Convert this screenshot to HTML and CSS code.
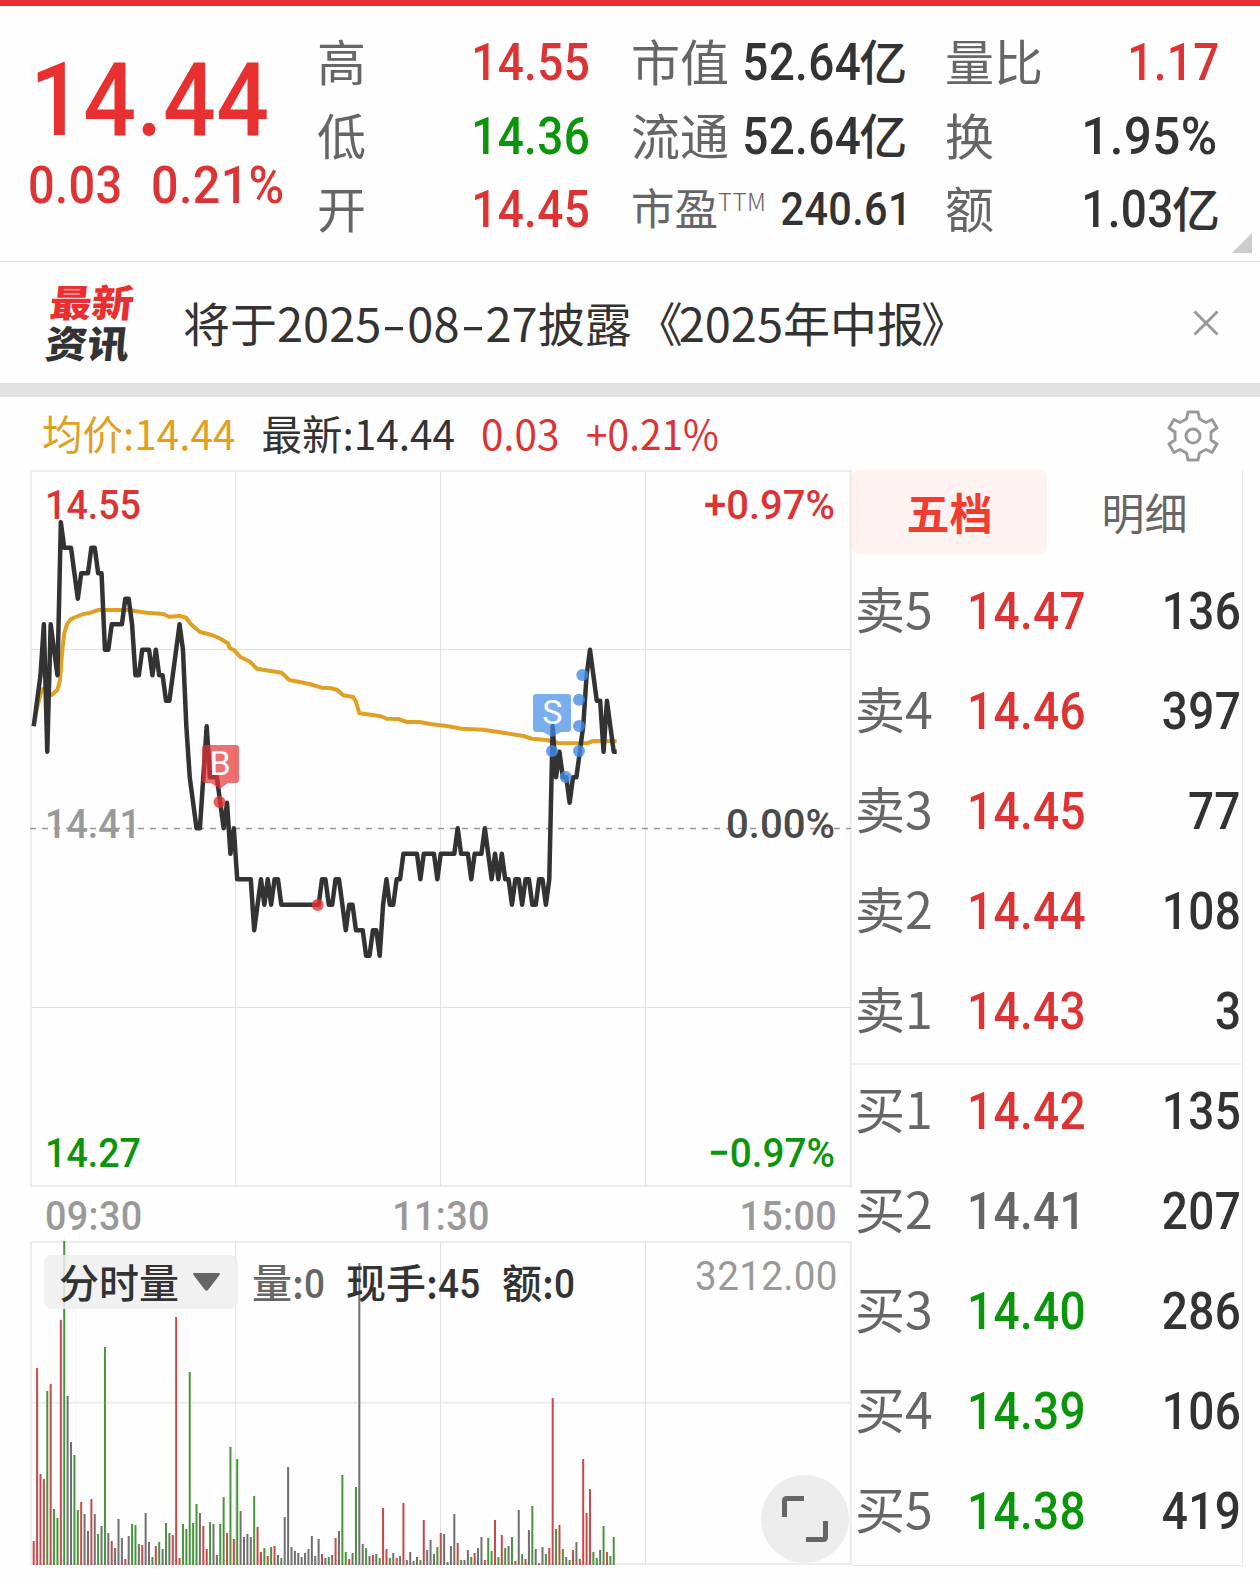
FILE: index.html
```html
<!DOCTYPE html>
<html lang="zh-CN">
<head>
    <meta charset="UTF-8">
    <meta name="viewport" content="width=device-width, initial-scale=1.0">
    <title>分时行情</title>
    <link rel="stylesheet" href="styles.css">
</head>
<body>
    <header class="quote">
        <div class="price-box">
            <div class="price num">14.44</div>
            <div class="change"><span class="num">0.03</span><span class="num">0.21%</span></div>
        </div>
        <div class="stats">
            <div class="stat"><span class="label">高</span><span class="num up">14.55</span></div>
            <div class="stat"><span class="label">低</span><span class="num down">14.36</span></div>
            <div class="stat"><span class="label">开</span><span class="num up">14.45</span></div>
        </div>
        <div class="stats">
            <div class="stat"><span class="label">市值</span><span class="value"><span class="num">52.64</span>亿</span></div>
            <div class="stat"><span class="label">流通</span><span class="value"><span class="num">52.64</span>亿</span></div>
            <div class="stat small"><span class="label">市盈<sup>TTM</sup></span><span class="num">240.61</span></div>
        </div>
        <div class="stats">
            <div class="stat"><span class="label">量比</span><span class="num up">1.17</span></div>
            <div class="stat"><span class="label">换</span><span class="num rate">1.95%</span></div>
            <div class="stat"><span class="label">额</span><span class="value"><span class="num">1.03</span>亿</span></div>
        </div>
        <div class="corner"></div>
    </header>

    <section class="news">
        <div class="news-logo"><span class="red">最新</span><span>资讯</span></div>
        <p class="news-text">将于2025<i>-</i>08<i>-</i>27披露<em>《</em>2025年中报<em>》</em></p>
        <svg class="close" viewBox="0 0 26 26"><path d="M1.5 1.5L24.5 24.5M24.5 1.5L1.5 24.5"/></svg>
    </section>

    <div class="legend">
        <span class="avg">均价:14.44</span>
        <span>最新:14.44</span>
        <span class="up">0.03</span>
        <span class="up pct">+0.21%</span>
        <svg class="gear" viewBox="-26 -26 52 52">
            <path d="M-5 -24H5L6.5 -17L13 -13.5L19 -16.5L24 -8L18 -4V4L24 8L19 16.5L13 13.5L6.5 17L5 24H-5L-6.5 17L-13 13.5L-19 16.5L-24 8L-18 4V-4L-24 -8L-19 -16.5L-13 -13.5L-6.5 -17Z"/>
            <circle r="7"/>
        </svg>
    </div>

    <main>
        <div class="charts">
            <svg class="price-chart" viewBox="0 0 822 718">
                <path class="border" d="M1 1H820M1 716H820M1 0V717"/>
                <path class="border wide" d="M821 0V718"/>
                <path class="grid" d="M205.5 1V716M410.5 1V716M615.5 1V716M1 179.5H820M1 537.5H820"/>
                <path class="zero" d="M0 358.5H821"/>
                <g class="axis">
                    <text class="up" x="15" y="49" textLength="96" lengthAdjust="spacingAndGlyphs">14.55</text>
                    <text class="up" x="674" y="49" textLength="131" lengthAdjust="spacingAndGlyphs">+0.97%</text>
                    <text class="muted" x="15" y="367.5" textLength="96" lengthAdjust="spacingAndGlyphs">14.41</text>
                    <text class="mid" x="696" y="367.5" textLength="109" lengthAdjust="spacingAndGlyphs">0.00%</text>
                    <text class="down" x="15" y="697" textLength="96" lengthAdjust="spacingAndGlyphs">14.27</text>
                    <text class="down" x="678" y="697" textLength="127" lengthAdjust="spacingAndGlyphs">−0.97%</text>
                </g>
                <polyline class="avg-line" points="3.7,255.7 7.3,236.7 11.7,220 15,217.7 18.3,223.3 21.7,225 27.3,220 30,210 32.3,180 34.3,163.3 36.7,155 40,150 43.3,148 48.3,146 53.3,144 58.3,143.3 68.3,140 100,140 105,141 116.7,142.7 133.3,144 139,146.7 150,146 156,147.7 160.7,154 170,162 181.7,165 189.3,168 197.7,173.3 200,178.3 204,180 210,186.7 220,191.7 226.7,198.7 251.7,202.7 259.3,210 279.3,214 291.7,217.7 300,218 307.3,220 313.3,225.3 323.3,227 326,231.7 329.3,243.3 350,246 356.7,248.7 368.3,249 376.7,252 390,252 400,254 416.7,256 431.7,258.7 453.3,259.7 476.7,263.3 493.3,266 501.7,268.7 516.7,270 528.3,273 556.7,273.3 563.3,271 586.7,271.3"/>
                <polyline class="price-line" id="priceLine"/>
                <g class="buy">
                    <path d="M175 275H206Q209 275 209 278V310Q209 313 206 313H198L189.5 319L181 313H175Q172 313 172 310V278Q172 275 175 275Z"/>
                    <circle cx="189.5" cy="332" r="6"/>
                    <circle cx="287.7" cy="435" r="6"/>
                </g>
                <g class="sell">
                    <path d="M506 224H538Q541 224 541 227V259Q541 262 538 262H531L522 267L513 262H506Q503 262 503 259V227Q503 224 506 224Z"/>
                    <circle cx="522" cy="281" r="6"/>
                    <circle cx="535.7" cy="307" r="6"/>
                    <circle cx="549" cy="281" r="6"/>
                    <circle cx="549" cy="256" r="6"/>
                    <circle cx="549" cy="229.7" r="6"/>
                    <circle cx="552.3" cy="205" r="6"/>
                </g>
                <text class="mark" x="190" y="305">B</text>
                <text class="mark" x="522.3" y="254">S</text>
            </svg>

            <div class="times"><span class="num">09:30</span><span class="num">11:30</span><span class="num">15:00</span></div>

            <div class="volume">
                <svg class="volume-chart" viewBox="0 0 822 324">
                    <path class="border" d="M1 1H820M1 161.7H820M1 323H820M1 0V324"/>
                    <path class="border wide" d="M821 0V324"/>
                    <path class="grid" d="M205.5 1V323M410.5 1V323M615.5 1V323"/>
                    <g id="volumeBars"></g>
                </svg>
                <div class="volume-head">
                    <span class="picker">分时量<svg viewBox="0 0 27 18"><path d="M1 0H26Q27.5 0 26.5 2L15 17Q13.5 18.5 12 17L.5 2Q-.5 0 1 0Z"/></svg></span>
                    <span class="vol-a">量:<b class="num">0</b></span>
                    <span class="vol-b">现手:<b class="num">45</b></span>
                    <span class="vol-c">额:<b class="num">0</b></span>
                    <span class="vol-max num">3212.00</span>
                </div>
                <div class="expand">
                    <svg viewBox="0 0 46 46"><path d="M2.5 21V5Q2.5 2.5 5 2.5H22M43.5 25V41Q43.5 43.5 41 43.5H24"/></svg>
                </div>
            </div>
        </div>

        <aside class="book">
            <div class="tabs"><span class="tab active">五档</span><span class="tab">明细</span></div>
            <div class="row"><span class="label">卖5</span><span class="num up">14.47</span><span class="num qty">136</span></div>
            <div class="row"><span class="label">卖4</span><span class="num up">14.46</span><span class="num qty">397</span></div>
            <div class="row"><span class="label">卖3</span><span class="num up">14.45</span><span class="num qty">77</span></div>
            <div class="row"><span class="label">卖2</span><span class="num up">14.44</span><span class="num qty">108</span></div>
            <div class="row"><span class="label">卖1</span><span class="num up">14.43</span><span class="num qty">3</span></div>
            <div class="row split"><span class="label">买1</span><span class="num up">14.42</span><span class="num qty">135</span></div>
            <div class="row"><span class="label">买2</span><span class="num flat">14.41</span><span class="num qty">207</span></div>
            <div class="row"><span class="label">买3</span><span class="num down">14.40</span><span class="num qty">286</span></div>
            <div class="row"><span class="label">买4</span><span class="num down">14.39</span><span class="num qty">106</span></div>
            <div class="row"><span class="label">买5</span><span class="num down">14.38</span><span class="num qty">419</span></div>
        </aside>
    </main>

    <script src="script.js"></script>
</body>
</html>
```
FILE: styles.css
```css
body {
    font-family: "Noto Sans CJK SC", sans-serif;
    margin: 0;
    padding: 0;
    background-color: #fefefe;
    color: #333;
}

.num {
    display: inline-block;
    font-family: Roboto, "Noto Sans CJK SC", sans-serif;
    font-weight: 500;
    letter-spacing: 0.4px;
    white-space: nowrap;
    transform: scaleX(0.9);
    transform-origin: right center;
}

.up {
    color: #dc3434;
}

.down {
    color: #0b950b;
}

.flat {
    color: #666;
}

/* quote header */
.quote {
    position: relative;
    box-sizing: border-box;
    height: 262px;
    border-top: 6px solid #e83030;
    border-bottom: 1px solid #e0e0e0;
    padding: 20px 39px 0 28px;
    display: grid;
    grid-template-columns: 247px 273px 272px 274px;
    column-gap: 42px;
    justify-content: start;
}

.quote .stats:nth-child(3) {
    margin: 0 2px 0 -1px;
}

.quote .stats:nth-child(4) {
    margin-left: -1px;
}

.price-box {
    white-space: nowrap;
}

.price {
    color: #e83030;
    font-size: 102px;
    line-height: 90px;
    letter-spacing: 0.6px;
    margin: 29px 0 0 2px;
    transform: scaleX(0.91);
    transform-origin: left center;
}

.change {
    display: flex;
    gap: 20px;
    margin-top: 11px;
    color: #dc3434;
    font-size: 51px;
    line-height: 60px;
}

.change .num {
    transform: scaleX(0.92);
    transform-origin: left center;
}

.change .num + .num {
    transform: scaleX(0.95);
}

.stat {
    height: 73.5px;
    line-height: 73px;
    display: flex;
    justify-content: space-between;
    font-size: 51px;
    white-space: nowrap;
}

.label {
    color: #666;
    font-size: 49px;
}

.stat .label,
.stat .value {
    margin-top: -3px;
}

.value {
    font-size: 48px;
    font-weight: 500;
}

.value .num {
    font-size: 51px;
    margin-right: -2px;
}

.stat .rate {
    transform: scaleX(0.97);
    margin-right: 2px;
}

.stat.small {
    font-size: 46px;
}

.stat.small .num {
    margin-right: 7px;
}

.small .label {
    font-size: 43.5px;
}

.small sup {
    font-size: 24px;
    font-weight: 300;
    line-height: 0;
    vertical-align: 14px;
    letter-spacing: 0.5px;
}

.corner {
    position: absolute;
    right: 8px;
    bottom: 8px;
    width: 20px;
    height: 20px;
    background-color: #ccc;
    clip-path: polygon(100% 0, 100% 100%, 0 100%);
}

/* news strip */
.news {
    height: 121px;
    border-bottom: 14px solid #e1e1e1;
    display: flex;
    align-items: center;
}

.news-logo {
    width: 96px;
    margin: -3px 0 0 48px;
    font-size: 42px;
    font-weight: 900;
    line-height: 46px;
    transform: skewX(-6deg) scaleY(0.9);
}

.news-logo span {
    display: block;
}

.news-logo .red {
    color: #e83030;
}

.news-text {
    margin: -1px 0 0 39px;
    font-size: 47px;
    line-height: 60px;
    white-space: nowrap;
}

.news-text i {
    font-style: normal;
    display: inline-block;
    width: 26px;
    text-align: center;
    transform: scaleX(1.5);
}

.news-text em {
    font-style: normal;
    display: inline-block;
    transform: translateX(4px);
}

.news-text em:last-child {
    transform: translateX(-3px);
}

.close {
    width: 26px;
    height: 26px;
    margin: 0 41px 0 auto;
    fill: none;
    stroke: #999;
    stroke-width: 3;
}

/* legend over the chart */
.legend {
    height: 73px;
    padding: 0 41px 0 42px;
    display: flex;
    align-items: center;
    gap: 27px;
    font-size: 40.5px;
    line-height: 72px;
}

.legend span {
    margin-top: -1px;
}

.legend span + span {
    margin-left: -1px;
}

.legend .pct {
    transform: scaleX(0.96);
    transform-origin: left center;
}

.avg {
    color: #e0a020;
}

.gear {
    width: 52px;
    height: 52px;
    margin: 5px 0 0 auto;
    fill: none;
    stroke: #999;
    stroke-width: 3;
    stroke-linejoin: round;
}

main {
    display: flex;
    padding-left: 30px;
}

.charts {
    width: 822px;
}

.charts svg {
    display: block;
}

.price-chart {
    width: 822px;
    height: 718px;
}

.border {
    fill: none;
    stroke: #ededed;
    stroke-width: 2;
}

.border.wide {
    stroke-width: 3;
}

.grid {
    fill: none;
    stroke: #e2e2e2;
    stroke-width: 1;
}

.zero {
    stroke: #999;
    stroke-width: 1.5;
    stroke-dasharray: 6 6;
}

.axis text {
    font-family: Roboto, sans-serif;
    font-size: 41px;
    font-weight: 500;
}

.axis .up {
    fill: #dc3434;
}

.axis .down {
    fill: #0b950b;
}

.axis .muted {
    fill: #999;
}

.axis .mid {
    fill: #4a4a4a;
}

.avg-line {
    fill: none;
    stroke: #dfa023;
    stroke-width: 4;
    stroke-linejoin: round;
}

.price-line {
    fill: none;
    stroke: #333;
    stroke-width: 4.5;
    stroke-linejoin: round;
}

.buy {
    fill: #e63232;
}

.buy path {
    opacity: 0.7;
}

.buy circle {
    opacity: 0.8;
}

.sell {
    fill: #438be8;
}

.sell path {
    opacity: 0.7;
}

.sell circle {
    opacity: 0.8;
}

.mark {
    font-family: Roboto, sans-serif;
    font-size: 34px;
    fill: #fff;
    text-anchor: middle;
}

.times {
    height: 53px;
    padding: 0 15px 0 15px;
    display: flex;
    justify-content: space-between;
    color: #999;
    font-size: 41px;
    line-height: 56px;
}

.times .num {
    transform: scaleX(0.92);
}

.times .num:first-child {
    transform-origin: left center;
}

.times .num:nth-child(2) {
    transform-origin: center;
}

/* volume */
.volume {
    position: relative;
    height: 324px;
}

.volume-chart {
    width: 822px;
    height: 324px;
}

.bar-r {
    fill: #cc4848;
}

.bar-g {
    fill: #46963c;
}

.bar-k {
    fill: #707070;
}

.volume-head {
    position: absolute;
    top: 14px;
    left: 14px;
    right: 14px;
    height: 54px;
    line-height: 52px;
    display: flex;
    font-size: 40px;
    font-weight: 500;
}

.volume-head > span {
    white-space: nowrap;
}

.picker {
    box-sizing: border-box;
    width: 194px;
    padding-left: 15px;
    border-radius: 8px;
    background-color: rgba(238, 238, 238, 0.85);
    display: flex;
}

.picker svg {
    width: 27px;
    height: 18px;
    margin: 18px 0 0 14px;
    fill: #666;
}

.volume-head b {
    font-size: 41px;
    transform-origin: left center;
}

.vol-a {
    color: #666;
    margin-left: 14px;
    width: 94px;
}

.vol-b {
    width: 156px;
}

.volume-head .vol-max {
    color: #999;
    font-size: 41px;
    font-weight: 400;
    line-height: 42px;
    margin-left: auto;
    transform: scaleX(0.94);
}

.expand {
    position: absolute;
    right: 3px;
    bottom: 2px;
    width: 88px;
    height: 88px;
    border-radius: 50%;
    background-color: #ededed;
    display: flex;
    align-items: center;
    justify-content: center;
}

.expand svg {
    width: 46px;
    height: 46px;
    fill: none;
    stroke: #666;
    stroke-width: 5;
}

/* order book */
.book {
    box-sizing: border-box;
    width: 391px;
    height: 1096px;
    border-right: 1px solid #e8e8e8;
    border-bottom: 1px solid #e8e8e8;
}

.tabs {
    display: flex;
    height: 91px;
}

.tab {
    flex: 1;
    height: 84px;
    line-height: 82px;
    text-align: center;
    font-size: 43px;
    color: #666;
    border-radius: 8px;
}

.tab.active {
    background-color: #fff3f2;
    color: #f23c32;
    font-weight: 700;
}

.row {
    box-sizing: border-box;
    height: 100px;
    line-height: 102px;
    padding: 0 1px 0 3px;
    display: flex;
    font-size: 51px;
}

.row .label {
    width: 112px;
    line-height: 93px;
    font-size: 50px;
}

.row .num {
    transform-origin: left center;
}

.row .qty {
    margin-left: auto;
    transform: scaleX(0.9);
    transform-origin: right center;
}

.row.split {
    position: relative;
}

.row.split::before {
    content: "";
    position: absolute;
    left: 0;
    right: 0;
    top: 2px;
    height: 2px;
    background-color: #f3f3f3;
}
```
FILE: script.js
```
// one point per trading minute, 240 minutes across the chart
const STEP = 3.392;
const START = 3.7;

// price per minute, in cents above the previous close (14.41)
const prices = [
    4, 5, 6, 8, 3, 8, 7, 6, 12, 11, 11, 11, 10, 9, 10, 10, 10, 11, 11, 10,
    10, 7, 7, 8, 8, 8, 8, 9, 9, 8, 6, 6, 7, 7, 7, 6, 7, 6, 6, 5,
    5, 6, 7, 8, 7, 4, 2, 1, 0, 0, 2, 4, 2, 2, 2, 1, 0, 1, -1, 0,
    -2, -2, -2, -2, -2, -4, -3, -2, -3, -2, -3, -2, -2, -3, -3, -3, -3, -3, -3, -3,
    -3, -3, -3, -3, -3, -2, -2, -3, -3, -2, -2, -3, -4, -3, -3, -4, -4, -4, -5, -5,
    -4, -4, -5, -3, -2, -3, -3, -2, -2, -1, -1, -1, -1, -1, -2, -1, -1, -1, -1, -2,
    -1, -1, -1, -1, -1, 0, -1, -1, -1, -2, -1, -1, -1, 0, -1, -2, -1, -2, -1, -2,
    -2, -3, -2, -2, -3, -2, -2, -3, -3, -2, -2, -3, -2, 4, 2, 3, 2, 2, 1, 2,
    2, 3, 4, 6, 7, 6, 5, 5, 3, 5, 4, 3
];

// volume per minute: colour (r = up, g = down, k = flat) and bar height
const volumes = (
    'r24 r197 r91 r86 g174 r181 g56 g47 r245 g324 k169 k123 g110 g55 r63 k51 k34 r66 k51 g31 ' +
    'k39 g218 k32 r24 k17 k46 k27 r6 k29 g41 g40 k21 r20 k52 k23 g8 r19 g23 k16 g42 ' +
    'k32 r30 r248 r7 g41 g36 g193 g42 g61 k52 r39 r16 g43 k41 k10 g41 g68 r32 g118 r26 ' +
    'g106 k54 k28 k31 k28 g69 r38 r13 g17 r9 g18 r19 k10 g7 k48 k98 k18 k14 k12 k8 ' +
    'k12 k16 k29 k9 k26 r11 k7 g8 k10 r27 k34 g90 g13 r6 k12 g78 k302 k21 g17 k9 ' +
    'r10 k11 g7 r57 r16 g7 k12 r7 k9 r62 k5 k13 k4 k8 g5 r45 k15 k25 k11 g18 ' +
    'r32 k31 k3 k19 k51 r22 g5 k5 k15 g8 r12 k17 k28 r5 g27 g14 r45 g8 r30 g17 ' +
    'k19 g28 r4 k55 g11 r6 k35 g59 k16 r2 k18 g11 r17 r167 g36 r40 g16 k8 g5 r15 ' +
    'k23 r6 r106 r52 r76 g13 g7 k15 g39 r13 g9 g28'
).split(' ');

const points = prices.map((c, i) => `${START + i * STEP},${358.3 - c * 25.5}`);
points.push(`586.7,${358.3 - 3 * 25.5}`);
document.getElementById('priceLine').setAttribute('points', points.join(' '));

const bars = document.getElementById('volumeBars');
volumes.forEach((v, i) => {
    const height = Number(v.slice(1));
    const rect = document.createElementNS('http://www.w3.org/2000/svg', 'rect');
    rect.setAttribute('class', 'bar-' + v[0]);
    rect.setAttribute('x', START + i * STEP - 1);
    rect.setAttribute('y', 324 - height);
    rect.setAttribute('width', 2);
    rect.setAttribute('height', height);
    bars.appendChild(rect);
});
```
